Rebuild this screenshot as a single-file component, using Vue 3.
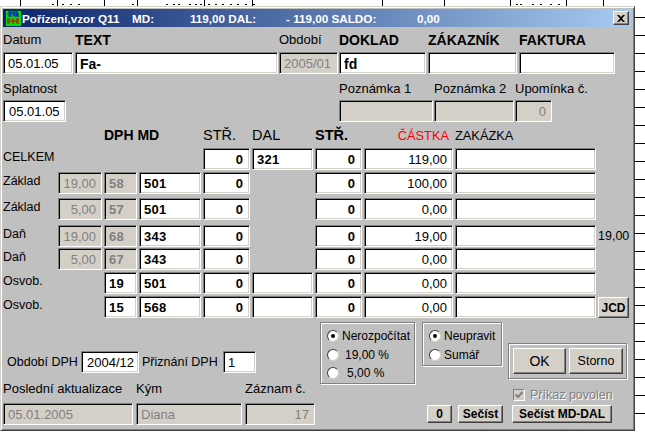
<template>
  <div class="desk">
    <svg class="sheet-bg" width="645" height="432">
      <rect v-for="x in bgLinesV" :key="'v' + x" :x="x" y="0" width="1" height="6" fill="#000" />
      <rect v-for="y in bgLinesH" :key="'h' + y" x="635" :y="y" width="10" height="1" fill="#000" />
      <rect v-for="x in bgMarks" :key="'m' + x" :x="x" y="4" width="2" height="1" fill="#000" />
    </svg>

    <div class="window">
      <div class="titlebar">
        <svg class="app-icon" width="16" height="16" viewBox="0 0 16 16">
          <rect width="16" height="16" fill="#00e000" />
          <rect x="0" y="0" width="16" height="1" fill="#004040" />
          <rect x="0" y="0" width="1" height="16" fill="#004040" />
          <path d="M3 2h10M5 2v4M9 2v4M12 2v4M2 4h12M3 6h4M9 6h5" stroke="#0000e0" fill="none" />
          <path d="M2 9h3M7 9h2M11 9h3M3 9v4M8 9v4M12 9v4M2 11h12M2 13h3M7 13h2M11 13h3" stroke="#e00000" fill="none" />
        </svg>
        <span class="tt-name">Pořízení,vzor Q11</span>
        <span class="tt-md">MD:</span>
        <span class="tt-dal">119,00 DAL:</span>
        <span class="tt-saldo">- 119,00 SALDO:</span>
        <span>0,00</span>
        <div class="close">
          <svg width="8" height="7" viewBox="0 0 8 7">
            <path d="M0 0h2l2 2 2-2h2L5 3.500 8 7H6L4 5 2 7H0l3-3.500z" fill="#000" />
          </svg>
        </div>
      </div>

      <div class="head-grid">
        <div class="lbl">Datum</div>
        <div class="caption">TEXT</div>
        <div class="lbl">Období</div>
        <div class="caption">DOKLAD</div>
        <div class="caption">ZÁKAZNÍK</div>
        <div class="caption">FAKTURA</div>
        <div class="field gap">05.01.05</div>
        <div class="field bold big">Fa-</div>
        <div class="field off">2005/01</div>
        <div class="field bold big gap">fd</div>
        <div class="field gap"></div>
        <div class="field"></div>
      </div>

      <div class="note-grid">
        <div class="lbl">Splatnost</div>
        <div class="lbl">Poznámka 1</div>
        <div class="lbl">Poznámka 2</div>
        <div class="lbl">Upomínka č.</div>
        <div class="field splat">05.01.05</div>
        <div class="field off gap"></div>
        <div class="field off gap"></div>
        <div class="field off right">0</div>
      </div>

      <div class="book">
        <div class="col-h bold small c3">DPH MD</div>
        <div class="col-h c5">STŘ.</div>
        <div class="col-h c6">DAL</div>
        <div class="col-h bold c7">STŘ.</div>
        <div class="col-h red thin c8">ČÁSTKA</div>
        <div class="col-h thin c9">ZAKÁZKA</div>

        <template v-for="(row, i) in rows" :key="i">
          <div class="row-lbl" :style="{ gridRow: i + 2, gridColumn: 1 }">{{ row.label }}</div>
          <div
            v-for="cell in row.cells"
            :key="cell.col"
            class="field"
            :class="cell.cls"
            :style="{ gridRow: i + 2, gridColumn: cell.col }"
          >{{ cell.text }}</div>
        </template>
        <div class="side-val">19,00</div>
        <div class="btn jcd">JCD</div>
      </div>

      <div class="foot">
        <div class="foot-left">
          <div class="vat-row">
            <span class="vat-a">Období DPH</span>
            <div class="field vat-period">2004/12</div>
            <span class="vat-b">Přiznání DPH</span>
            <div class="field vat-no">1</div>
          </div>
          <div class="audit">
            <div class="lbl">Poslední aktualizace</div>
            <div class="lbl">Kým</div>
            <div class="lbl">Záznam č.</div>
            <div class="field off a1">05.01.2005</div>
            <div class="field off a2">Diana</div>
            <div class="field off right">17</div>
          </div>
        </div>

        <div class="foot-right">
          <div class="controls">
            <div class="group g1">
              <div v-for="r in calcOptions" :key="r.text" class="radio-row">
                <span class="radio" :class="{ on: r.on }"></span>
                <span :class="r.cls">{{ r.text }}</span>
              </div>
            </div>
            <div class="group g2">
              <div v-for="r in sumOptions" :key="r.text" class="radio-row">
                <span class="radio" :class="{ on: r.on }"></span>
                <span>{{ r.text }}</span>
              </div>
            </div>
            <div class="ok-col">
              <div class="ok-panel">
                <div class="btn plain ok">OK</div>
                <div class="btn plain storno">Storno</div>
              </div>
              <div class="permit">
                <span class="check">
                  <svg width="10" height="10" viewBox="0 0 10 10">
                    <path d="M1.500 4.500 4 7l4.500-5" stroke="#808080" stroke-width="2" fill="none" />
                  </svg>
                </span>
                <span class="permit-text">Příkaz povolen</span>
              </div>
            </div>
          </div>
          <div class="actions">
            <div class="btn b0">0</div>
            <div class="btn b1">Sečíst</div>
            <div class="btn b2">Sečíst MD-DAL</div>
          </div>
        </div>
      </div>
    </div>
  </div>
</template>

<script setup>
const bgLinesV = [20, 57, 104, 137, 204, 252, 382, 444, 510, 566, 603]
const bgLinesH = Array.from({ length: 23 }, (_, i) => 17 + i * 18)
const bgMarks = [52, 62, 70, 78, 132, 166, 173, 178, 189, 195, 200, 208, 215, 222, 230, 237, 245, 253, 516, 520, 532, 540, 550, 558]

const num = (col, text) => ({ col, text, cls: 'bold right' })
const code = (col, text) => ({ col, text, cls: 'bold code' })
const amount = text => ({ col: 8, text, cls: 'right' })
const empty = col => ({ col, text: '', cls: '' })
const rate = text => ({ col: 2, text, cls: 'off right' })
const acct = text => ({ col: 3, text, cls: 'off bold code' })

const rows = [
  { label: 'CELKEM', cells: [num(5, '0'), code(6, '321'), num(7, '0'), amount('119,00'), empty(9)] },
  { label: 'Základ', cells: [rate('19,00'), acct('58'), code(4, '501'), num(5, '0'), num(7, '0'), amount('100,00'), empty(9)] },
  { label: 'Základ', cells: [rate('5,00'), acct('57'), code(4, '501'), num(5, '0'), num(7, '0'), amount('0,00'), empty(9)] },
  { label: 'Daň', cells: [rate('19,00'), acct('68'), code(4, '343'), num(5, '0'), num(7, '0'), amount('19,00'), empty(9)] },
  { label: 'Daň', cells: [rate('5,00'), acct('67'), code(4, '343'), num(5, '0'), num(7, '0'), amount('0,00'), empty(9)] },
  { label: 'Osvob.', cells: [code(3, '19'), code(4, '501'), num(5, '0'), empty(6), num(7, '0'), amount('0,00'), empty(9)] },
  { label: 'Osvob.', cells: [code(3, '15'), code(4, '568'), num(5, '0'), empty(6), num(7, '0'), amount('0,00'), empty(9)] }
]

const calcOptions = [
  { text: 'Nerozpočítat', on: true, cls: '' },
  { text: '19,00 %', on: false, cls: 'ind1' },
  { text: '5,00 %', on: false, cls: 'ind2' }
]
const sumOptions = [
  { text: 'Neupravit', on: true },
  { text: 'Sumář', on: false }
]
</script>

<style>
html, body {
  margin: 0;
  background: #fff;
  overflow: hidden;
}
</style>

<style scoped>
.desk {
  position: relative;
  width: 645px;
  height: 432px;
  overflow: hidden;
  background: #fff;
  font-family: "Liberation Sans", Arial, sans-serif;
  font-size: 13px;
  color: #000;
}

.sheet-bg {
  position: absolute;
  left: 0;
  top: 0;
}

.window {
  position: absolute;
  left: 0;
  top: 6px;
  width: 635px;
  height: 425px;
  box-sizing: border-box;
  padding: 2px 3px 0 2px;
  background: #c0c0c0;
  border: 1px solid;
  border-color: #d4d0c8 #404040 #404040 #d4d0c8;
  box-shadow: inset 1px 1px 0 #fff, inset -1px -1px 0 #808080;
}

.titlebar {
  height: 18px;
  display: flex;
  align-items: center;
  padding-left: 2px;
  background: linear-gradient(90deg, #0a246a, #a6caf0);
  color: #fff;
  font-weight: bold;
  font-size: 11.700px;
  white-space: nowrap;
}

.app-icon {
  flex: none;
  margin-right: 1px;
}

.tt-name { width: 110px; }
.tt-md { width: 58px; }
.tt-dal { width: 96px; }
.tt-saldo { width: 131px; }

.close {
  margin-left: auto;
  margin-right: 2px;
  width: 16px;
  height: 14px;
  box-sizing: border-box;
  display: flex;
  align-items: center;
  justify-content: center;
  background: #d4d0c8;
  border: 1px solid;
  border-color: #fff #404040 #404040 #fff;
  box-shadow: inset -1px -1px 0 #808080;
}

.field {
  box-sizing: border-box;
  height: 22px;
  padding: 3px 3px 0 4px;
  background: #fff;
  border: 1px solid;
  border-color: #808080 #fff #fff #808080;
  box-shadow: inset 1px 1px 0 #000, inset -1px -1px 0 #d4d0c8;
  line-height: 16px;
  white-space: nowrap;
  overflow: hidden;
  font-size: 13px;
}

.field.off {
  background: #d4d0c8;
  color: #808080;
}

.field.bold { font-weight: bold; }
.field.big { font-size: 14px; }
.field.right { text-align: right; padding-right: 5px; }
.field.bold.right { padding-right: 6px; }
.field.code { letter-spacing: 0.3px; }
.field.gap { margin-right: 1px; }

.lbl {
  white-space: nowrap;
}

.caption {
  font-weight: bold;
  font-size: 14px;
  white-space: nowrap;
}

.head-grid {
  display: grid;
  grid-template-columns: 71px 203px 59px 88px 90px 96px;
  grid-template-rows: 25px 24px;
  column-gap: 1px;
  align-items: center;
}

.head-grid .field { align-self: start; }
.head-grid > .field:first-of-type { padding-left: 5px; }

.note-grid {
  display: grid;
  grid-template-columns: 336px 95px 81px 37px;
  grid-template-rows: 24px 22px;
  align-items: center;
}

.note-grid .splat { width: 63px; padding-left: 5px; }

.book {
  display: grid;
  grid-template-columns: 53px 44px 33px 62px 47px 61px 47px 89px 141px 34px;
  grid-template-rows: 26px 24px 26px 27px 23px 24px 24px 24px;
  column-gap: 2px;
  align-items: start;
}

.col-h {
  grid-row: 1;
  align-self: center;
  font-size: 14.500px;
  white-space: nowrap;
}

.col-h.bold { font-weight: bold; }
.col-h.small { font-size: 14px; }
.col-h.thin { font-size: 12.800px; }
.col-h.red { color: #f00; justify-self: end; padding-right: 4px; }
.c3 { grid-column: 3 / span 2; }
.c5 { grid-column: 5; }
.c6 { grid-column: 6; }
.c7 { grid-column: 7; }
.c8 { grid-column: 8; }
.c9 { grid-column: 9; }

.row-lbl {
  align-self: start;
  padding-top: 1px;
  font-size: 12.500px;
  line-height: 16px;
  white-space: nowrap;
}

.side-val {
  grid-row: 5;
  grid-column: 10;
  padding-top: 3px;
  font-size: 12.500px;
  line-height: 16px;
  white-space: nowrap;
}

.btn {
  box-sizing: border-box;
  display: flex;
  align-items: center;
  justify-content: center;
  background: #d4d0c8;
  border: 1px solid;
  border-color: #fff #404040 #404040 #fff;
  box-shadow: inset -1px -1px 0 #808080;
  font-weight: bold;
  font-size: 12px;
  white-space: nowrap;
}

.btn.plain {
  font-weight: normal;
  font-size: 12.500px;
  height: 26px;
}

.jcd {
  grid-row: 8;
  grid-column: 10;
  width: 31px;
  height: 21px;
  margin-top: 1px;
}

.foot {
  display: flex;
}

.foot-left {
  flex: none;
  width: 317px;
  padding-top: 31px;
  box-sizing: border-box;
}

.vat-row {
  display: flex;
  align-items: center;
  white-space: nowrap;
  height: 22px;
  font-size: 12.500px;
}

.vat-a { width: 78px; padding-left: 4px; box-sizing: border-box; }
.vat-period { width: 58px; padding-left: 5px; padding-right: 0; }
.vat-b { width: 84px; padding-left: 3px; box-sizing: border-box; }
.vat-no { width: 33px; }

.audit {
  display: grid;
  grid-template-columns: 133px 109px 70px;
  grid-template-rows: 30px 22px;
  align-items: center;
}

.audit .a1 { width: 130px; }
.audit .a2 { width: 106px; }

.foot-right {
  flex: none;
  width: 312px;
  padding-top: 2px;
}

.controls {
  display: flex;
  height: 83px;
  align-items: flex-start;
}

.group {
  box-sizing: border-box;
  border: 1px solid #808080;
  box-shadow: inset 1px 1px 0 #fff, 1px 1px 0 #fff;
  padding: 4px 0 0 6px;
  font-size: 12px;
}

.g1 { width: 95px; height: 62px; margin-right: 7px; }
.g2 { width: 80px; height: 44px; margin-right: 6px; }

.radio-row {
  height: 18.500px;
  display: flex;
  align-items: center;
  white-space: nowrap;
}

.radio {
  flex: none;
  width: 12px;
  height: 12px;
  box-sizing: border-box;
  border-radius: 50%;
  background: #fff;
  border: 1px solid;
  border-color: #404040 #d4d0c8 #d4d0c8 #404040;
  margin-right: 3px;
  position: relative;
}

.radio.on::after {
  content: "";
  position: absolute;
  left: 3px;
  top: 3px;
  width: 4px;
  height: 4px;
  border-radius: 50%;
  background: #000;
}

.ind1 { margin-left: 3px; }
.ind2 { margin-left: 5px; }

.ok-col {
  width: 119px;
  margin-top: 21px;
}

.ok-panel {
  box-sizing: border-box;
  height: 36px;
  padding: 4px 3px 0 4px;
  display: flex;
  gap: 3px;
  border: 1px solid #808080;
  box-shadow: inset 1px 1px 0 #fff, 1px 1px 0 #fff;
}

.btn.ok { width: 53px; font-size: 14px; }
.storno { width: 54px; }

.permit {
  display: flex;
  align-items: center;
  margin: 9px 0 0 5px;
  color: #808080;
  font-size: 12.500px;
  white-space: nowrap;
}

.check {
  flex: none;
  box-sizing: border-box;
  width: 12px;
  height: 12px;
  display: flex;
  background: #d4d0c8;
  border: 1px solid;
  border-color: #808080 #fff #fff #808080;
  margin-right: 5px;
}

.permit-text {
  text-shadow: 1px 1px 0 #fff;
}

.actions {
  display: flex;
  padding-left: 107px;
}

.actions .btn { height: 18px; }
.b0 { width: 25px; margin-right: 6px; }
.b1 { width: 45px; margin-right: 9px; }
.b2 { width: 100px; }
</style>
